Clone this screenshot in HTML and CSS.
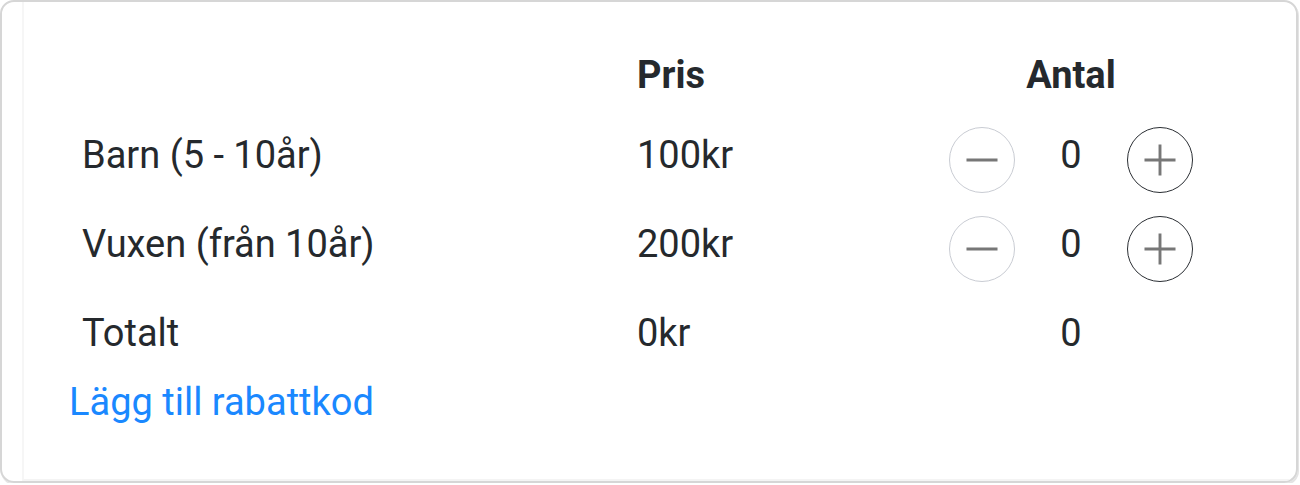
FILE: index.html
```html
<!DOCTYPE html>
<html lang="sv">
<head>
    <meta charset="UTF-8">
    <meta name="viewport" content="width=device-width, initial-scale=1.0">
    <title>Biljetter</title>
    <link rel="stylesheet" href="styles.css">
</head>
<body>
    <div class="card">
        <div class="inner">
            <div class="tickets">
                <div class="row head">
                    <div class="label"></div>
                    <div class="price">Pris</div>
                    <div class="qty">Antal</div>
                </div>

                <div class="row">
                    <div class="label">Barn (5 - 10år)</div>
                    <div class="price">100kr</div>
                    <div class="qty">
                        <button class="step minus" aria-label="Minska">
                            <svg viewBox="0 0 66 66"><path d="M17 33h32"/></svg>
                        </button>
                        <span class="count">0</span>
                        <button class="step plus" aria-label="Öka">
                            <svg viewBox="0 0 66 66"><path d="M17 33h32M33 17v32"/></svg>
                        </button>
                    </div>
                </div>

                <div class="row">
                    <div class="label">Vuxen (från 10år)</div>
                    <div class="price">200kr</div>
                    <div class="qty">
                        <button class="step minus" aria-label="Minska">
                            <svg viewBox="0 0 66 66"><path d="M17 33h32"/></svg>
                        </button>
                        <span class="count">0</span>
                        <button class="step plus" aria-label="Öka">
                            <svg viewBox="0 0 66 66"><path d="M17 33h32M33 17v32"/></svg>
                        </button>
                    </div>
                </div>

                <div class="row total">
                    <div class="label">Totalt</div>
                    <div class="price">0kr</div>
                    <div class="qty"><span class="count">0</span></div>
                </div>
            </div>

            <a class="discount" href="#">Lägg till rabattkod</a>
        </div>
    </div>
</body>
</html>
```

FILE: styles.css
```css
body {
    margin: 0;
    background: #fff;
    font-family: Roboto, "Liberation Sans", sans-serif;
    color: #25292d;
}
.card {
    width: 1298px;
    height: 483px;
    border: 2px solid #d6d6d6;
    border-radius: 14px;
    box-shadow: 1px 2px 0 #e4e4e4;
    box-sizing: border-box;
    overflow: hidden;
}
.inner {
    margin-left: 20px;
    height: 100%;
    border-left: 2px solid #f6f6f6;
    border-bottom: 2px solid #f4f4f4;
    box-sizing: border-box;
    padding-top: 46px;
}
.tickets {
    display: flex;
    flex-direction: column;
}
.row {
    display: grid;
    grid-template-columns: 613px 312px 244px;
    align-items: center;
    height: 89px;
    font-size: 38px;
}
.row .label { padding-left: 58px; }
.row .label,
.row .price { margin-bottom: 10px; }
.head {
    height: 54px;
    margin-bottom: 13px;
    font-weight: bold;
}
.head .label,
.head .price { margin-bottom: 0; }
.head .qty { justify-content: center; }
.qty {
    display: flex;
    align-items: center;
}
.total .qty { justify-content: center; }
.count {
    width: 112px;
    text-align: center;
    margin-bottom: 10px;
}
.step {
    width: 66px;
    height: 66px;
    padding: 0;
    border-radius: 50%;
    background: #fff;
    cursor: pointer;
}
.step svg {
    display: block;
    width: 100%;
    height: 100%;
}
.step path {
    stroke: #777;
    stroke-width: 3;
    fill: none;
}
.minus { border: 1.5px solid #c9ccd3; }
.plus { border: 1.5px solid #2a2e33; }
.discount {
    display: block;
    margin-left: 45px;
    margin-top: -2px;
    font-size: 38px;
    color: #1a88ff;
    text-decoration: none;
}
```
